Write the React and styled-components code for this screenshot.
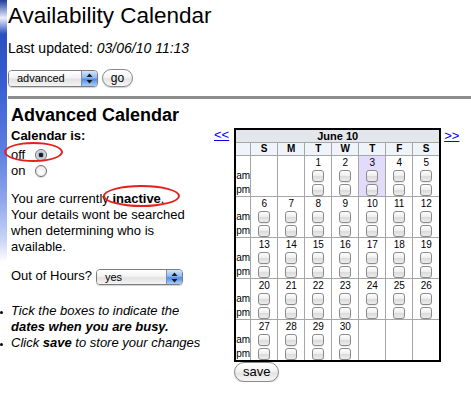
import React from 'react'
import styled, { createGlobalStyle } from 'styled-components'

const GlobalStyle = createGlobalStyle`
  html, body { margin: 0; padding: 0; }
  body {
    font-family: "Liberation Sans", Arial, sans-serif;
    font-size: 13px;
    color: #000;
    background-color: #fff;
    background-image: linear-gradient(
      to bottom,
      #1d3c9c 0,
      #e9efff 18px,
      #2a4fc0 34px,
      #3b60d4 90px,
      #5b7ee0 150px,
      #8ea6ec 200px,
      #c9d4f6 240px,
      #ffffff 262px
    );
    background-repeat: no-repeat;
    background-size: 7px 270px;
  }
`

const weeks = [
  [null, null, 1, 2, 3, 4, 5],
  [6, 7, 8, 9, 10, 11, 12],
  [13, 14, 15, 16, 17, 18, 19],
  [20, 21, 22, 23, 24, 25, 26],
  [27, 28, 29, 30, null, null, null],
]
const dayNames = ['S', 'M', 'T', 'W', 'T', 'F', 'S']
const today = 3

function Arrows() {
  return (
    <svg width="7" height="11" viewBox="0 0 7 11">
      <path d="M3.5 0.5 L6.5 4 L0.5 4 Z" fill="#1b1b1b" />
      <path d="M3.5 10.5 L6.5 7 L0.5 7 Z" fill="#1b1b1b" />
    </svg>
  )
}

function Popup({ value, width, height }) {
  return (
    <SelectBox $w={width} $h={height}>
      <SelectLabel>{value}</SelectLabel>
      <SelectArrows>
        <Arrows />
      </SelectArrows>
    </SelectBox>
  )
}

function App() {
  return (
    <Page>
      <GlobalStyle />
      <Title>Availability Calendar</Title>
      <Updated>
        Last updated: <em>03/06/10 11:13</em>
      </Updated>
      <Controls>
        <Popup value="advanced" width={90} height={17} />
        <PillButton $w={31} $h={18}>go</PillButton>
      </Controls>
      <Rule />

      <Main>
        <LeftCol>
          <Heading>Advanced Calendar</Heading>
          <FieldLabel>Calendar is:</FieldLabel>
          <RadioGrid>
            <span>off</span>
            <Radio $checked />
            <span>on</span>
            <Radio />
          </RadioGrid>
          <Status>
            You are currently <b>inactive</b>.<br />
            Your details wont be searched when determining who is available.
          </Status>
          <HoursRow>
            <span>Out of Hours?</span>
            <HoursSelect>
              <Popup value="yes" width={87} height={16} />
            </HoursSelect>
          </HoursRow>
          <NoteList>
            <NoteItem>
              <Bullet />
              <span>
                Tick the boxes to indicate the<br />
                <b>dates when you are busy.</b>
              </span>
            </NoteItem>
            <NoteItem>
              <Bullet />
              <span>
                Click <b>save</b> to store your changes
              </span>
            </NoteItem>
          </NoteList>

          <Ring style={{ left: -4, top: 43, width: 59, height: 20 }} />
          <Ring style={{ left: 95, top: 86, width: 77, height: 22 }} />
        </LeftCol>

        <RightCol>
          <NavLink href="#" $side="prev">&lt;&lt;</NavLink>
          <CalendarWrap>
            <Calendar>
              <MonthHead>June 10</MonthHead>
              <DayHead />
              {dayNames.map((d, i) => (
                <DayHead key={i}>{d}</DayHead>
              ))}
              {weeks.map((week, w) => (
                <React.Fragment key={w}>
                  <SlotLabels>
                    <SlotLabel>am</SlotLabel>
                    <SlotLabel>pm</SlotLabel>
                  </SlotLabels>
                  {week.map((day, i) => (
                    <DayCell key={i} $today={day === today}>
                      {day && (
                        <>
                          <DayNum>{day}</DayNum>
                          <Check />
                          <Check />
                        </>
                      )}
                    </DayCell>
                  ))}
                </React.Fragment>
              ))}
            </Calendar>
            <PillButton $w={45} $h={20} $size={13}>save</PillButton>
          </CalendarWrap>
          <NavLink href="#" $side="next">&gt;&gt;</NavLink>
        </RightCol>
      </Main>
    </Page>
  )
}

export default App

const Page = styled.div`
  padding-left: 8px;
  width: 471px;
  box-sizing: border-box;
`

const Title = styled.h1`
  margin: 0;
  padding-top: 3px;
  font-size: 22.5px;
  font-weight: normal;
  line-height: 26px;
`

const Updated = styled.div`
  margin-top: 11px;
  font-size: 14px;
  line-height: 16px;
`

const Controls = styled.div`
  margin-top: 13px;
  height: 18px;
  display: flex;
  align-items: center;
  gap: 4px;
`

const SelectBox = styled.div`
  width: ${p => p.$w}px;
  height: ${p => p.$h}px;
  box-sizing: border-box;
  display: flex;
  border: 1px solid #7d7d7d;
  border-radius: 4px;
  overflow: hidden;
  box-shadow: 0 1px 1px rgba(0, 0, 0, 0.18);
`

const SelectLabel = styled.div`
  flex: 1;
  padding-left: 8px;
  font-size: 11px;
  line-height: 14px;
  display: flex;
  align-items: center;
  background: linear-gradient(#ffffff, #f3f3f3 45%, #e2e2e2 55%, #f4f4f4);
`

const SelectArrows = styled.div`
  width: 15px;
  border-left: 1px solid #7a8fb3;
  display: flex;
  align-items: center;
  justify-content: center;
  background: linear-gradient(#d4e4fb, #8fb8f2 45%, #4f8ee6 55%, #a9cdf8);
`

const PillButton = styled.div`
  width: ${p => p.$w}px;
  height: ${p => p.$h}px;
  box-sizing: border-box;
  border: 1px solid #8a8a8a;
  border-radius: ${p => p.$h / 2}px;
  background: linear-gradient(#ffffff, #f4f4f4 45%, #e4e4e4 55%, #f7f7f7);
  box-shadow: 0 1px 1px rgba(0, 0, 0, 0.2);
  font-size: ${p => p.$size || 12}px;
  line-height: 16px;
  display: flex;
  align-items: center;
  justify-content: center;
  padding-bottom: 1px;
`

const Rule = styled.div`
  margin-top: 9px;
  height: 3px;
  background: #8c8c8c;
`

const Main = styled.div`
  display: flex;
  align-items: flex-start;
`

const LeftCol = styled.div`
  position: relative;
  width: 205px;
  padding-left: 3px;
  box-sizing: border-box;
`

const Heading = styled.h2`
  margin: 6px 0 0;
  font-size: 18px;
  line-height: 20px;
  font-weight: bold;
`

const FieldLabel = styled.div`
  margin-top: 3px;
  font-weight: bold;
  line-height: 16px;
`

const RadioGrid = styled.div`
  margin-top: 3px;
  display: grid;
  grid-template-columns: 24px 13px;
  grid-auto-rows: 16px;
  align-items: center;
  line-height: 16px;
`

const Radio = styled.span`
  width: 12px;
  height: 12px;
  box-sizing: border-box;
  border-radius: 50%;
  border: 1px solid #6e6e6e;
  background: ${p =>
    p.$checked
      ? 'radial-gradient(circle, #1c1c1c 0 2px, #9fb2c9 2.5px, #e9eef5 5px)'
      : 'radial-gradient(circle at 50% 65%, #ffffff, #e1e1e1)'};
  box-shadow: 0 1px 1px rgba(0, 0, 0, 0.15);
`

const Status = styled.p`
  margin: 12px 0 0;
  width: 186px;
  line-height: 16px;
`

const HoursRow = styled.div`
  margin-top: 13px;
  display: flex;
  align-items: flex-start;
  gap: 4px;
  line-height: 16px;
`

const HoursSelect = styled.div`
  margin-top: 1px;
`

const NoteList = styled.ul`
  margin: 18px 0 0 -11px;
  padding: 0;
  list-style: none;
  font-style: italic;
  line-height: 16px;
`

const NoteItem = styled.li`
  display: grid;
  grid-template-columns: 11px auto;
  white-space: nowrap;
`

const Bullet = styled.span`
  width: 3px;
  height: 3px;
  margin-top: 8px;
  border-radius: 50%;
  background: #000;
`

const Ring = styled.span`
  position: absolute;
  box-sizing: border-box;
  border: 2px solid #e3211c;
  border-radius: 50%;
  pointer-events: none;
`

const RightCol = styled.div`
  display: flex;
  align-items: flex-start;
  padding-top: 29px;
`

const NavLink = styled.a`
  color: #0000ee;
  text-decoration: underline;
  line-height: 16px;
  margin: ${p => (p.$side === 'prev' ? '-1px 5px 0 1px' : '0 0 0 3px')};
`

const CalendarWrap = styled.div`
  display: flex;
  flex-direction: column;
  align-items: flex-start;
`

const Calendar = styled.div`
  display: grid;
  grid-template-columns: 14px repeat(7, 27px);
  border: 2px solid #000;
  font-size: 10px;
`

const MonthHead = styled.div`
  grid-column: 1 / -1;
  height: 12px;
  line-height: 12px;
  text-align: center;
  font-size: 11px;
  font-weight: bold;
  background: #e3e6ec;
`

const DayHead = styled.div`
  height: 13px;
  box-sizing: border-box;
  border-top: 1px solid #a6a6a6;
  border-left: 1px solid #a6a6a6;
  line-height: 12px;
  text-align: center;
  font-weight: bold;
  background: #eff3fa;
  &:nth-child(2) { border-left: none; }
`

const SlotLabels = styled.div`
  height: 41px;
  box-sizing: border-box;
  border-top: 1px solid #a6a6a6;
  padding-top: 14px;
  display: flex;
  flex-direction: column;
  gap: 2px;
`

const SlotLabel = styled.div`
  height: 12px;
  line-height: 12px;
  white-space: nowrap;
`

const DayCell = styled.div`
  height: 41px;
  box-sizing: border-box;
  border-top: 1px solid #a6a6a6;
  border-left: 1px solid #a6a6a6;
  padding-top: 1px;
  display: flex;
  flex-direction: column;
  align-items: center;
  gap: 2px;
  background: ${p => (p.$today ? '#e2dbfb' : 'transparent')};
`

const DayNum = styled.div`
  height: 11px;
  line-height: 11px;
`

const Check = styled.span`
  width: 12px;
  height: 12px;
  box-sizing: border-box;
  border: 1px solid #8a8a8a;
  border-radius: 3px;
  background: linear-gradient(#fefefe, #efefef 45%, #dcdcdc 55%, #ececec);
  box-shadow: 0 1px 0 rgba(0, 0, 0, 0.08);
`
